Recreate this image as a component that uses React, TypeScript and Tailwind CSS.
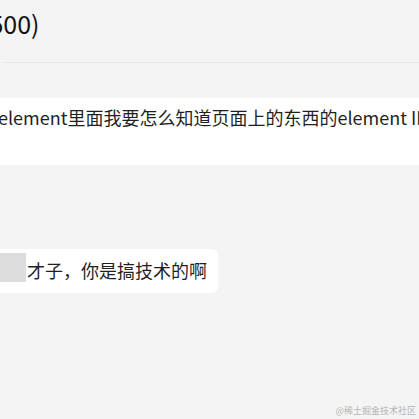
import React from "react";

export default function App() {
  return (
    <div
      className="relative w-[419px] h-[419px] overflow-hidden bg-[#f4f4f4] text-[#1f1f1f]"
      style={{ fontFamily: '"Noto Sans CJK SC", "Noto Sans", sans-serif' }}
    >
      <div className="h-[63px] ml-[3px] border-b border-[#e6e6e6] flex items-start">
        <div className="-ml-[22px] mt-[5px] text-[25px] leading-[36px] text-[#111] whitespace-nowrap">
          (500)
        </div>
      </div>
      <div className="mt-[35px] h-[67px] bg-white pt-[7px]">
        <div className="-ml-[2px] text-[18px] leading-[24px] whitespace-nowrap">
          element里面我要怎么知道页面上的东西的element ID
        </div>
      </div>
      <div className="mt-[84px] w-[218px] h-[44px] bg-white rounded-r-[6px] flex items-start pt-[4px]">
        <div className="w-[26px] h-[29px] bg-[#dcdcdc] shrink-0" />
        <span className="ml-[1px] mt-[5px] text-[18px] leading-[24px] whitespace-nowrap">
          才子，你是搞技术的啊
        </span>
      </div>
      <div className="absolute right-[3px] bottom-[2px] text-[9px] leading-[12px] text-[#b4b4b4] whitespace-nowrap">
        @稀土掘金技术社区
      </div>
    </div>
  );
}
